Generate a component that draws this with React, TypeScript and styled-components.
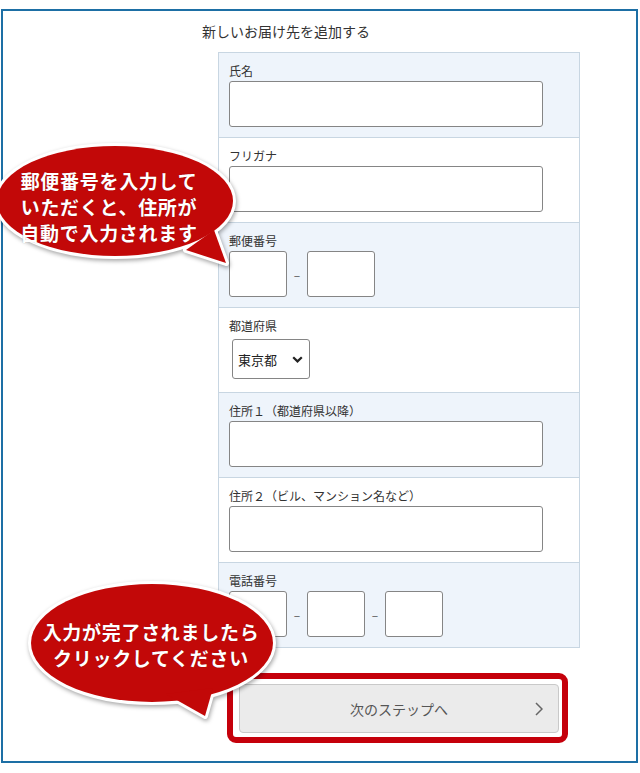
import React from "react";
import styled, { createGlobalStyle } from "styled-components";

const Global = createGlobalStyle`
  html, body { margin: 0; padding: 0; background: #fff; }
  body { font-family: "Noto Sans CJK JP", "Noto Sans", sans-serif; color: #333; }
  * { box-sizing: border-box; }
`;

const Page = styled.div`
  position: relative;
  width: 640px;
  height: 773px;
  padding: 9px 0 0 1px;
  overflow: hidden;
`;

const Frame = styled.div`
  width: 637px;
  height: 754px;
  border: 2px solid #1d6fa5;
  padding: 10px 0 0 199px;
`;

const Title = styled.h2`
  margin: 0 0 11px;
  font-size: 14px;
  line-height: 20px;
  font-weight: 400;
  color: #333;
`;

const Form = styled.div`
  margin-left: 16px;
  width: 362px;
  border: 1px solid #c8d6e2;
`;

const Row = styled.div<{ $shaded: boolean }>`
  height: 85px;
  padding: 9px 10px 0;
  border-top: 1px solid #c8d6e2;
  background: ${(p) => (p.$shaded ? "#eef4fb" : "#ffffff")};
  &:first-child {
    height: 84px;
    border-top: none;
  }
`;

const Label = styled.div`
  font-size: 12px;
  line-height: 18px;
  margin-bottom: 1px;
  color: #333;
`;

const TextInput = styled.input<{ $w?: number }>`
  display: block;
  width: ${(p) => p.$w ?? 314}px;
  height: 46px;
  border: 1px solid #858585;
  border-radius: 3px;
  background: #fff;
  padding: 0 6px;
  font: inherit;
  font-size: 13px;
`;

const Inline = styled.div`
  display: flex;
  align-items: center;
`;

const Dash = styled.span`
  width: 20px;
  text-align: center;
  font-size: 12px;
  color: #555;
`;

const SelectWrap = styled.div`
  position: relative;
  width: 78px;
  height: 40px;
  margin: 4px 0 0 3px;
`;

const Select = styled.select`
  appearance: none;
  -webkit-appearance: none;
  width: 100%;
  height: 100%;
  border: 1px solid #858585;
  border-radius: 3px;
  background: #fff;
  padding: 0 0 0 5px;
  font-family: "Noto Sans CJK JP", sans-serif;
  font-size: 13px;
  color: #222;
`;

const SelectArrow = styled.svg`
  position: absolute;
  right: 7px;
  top: 17px;
  pointer-events: none;
`;

const ButtonArea = styled.div`
  margin: 25px 0 0 25px;
`;

const Highlight = styled.div`
  width: 341px;
  height: 70px;
  border: 6px solid #c5000b;
  border-radius: 9px;
  padding: 5px 3px 4px 6px;
`;

const NextButton = styled.button`
  position: relative;
  display: flex;
  align-items: center;
  justify-content: center;
  width: 320px;
  height: 49px;
  background: #ebebeb;
  border: 1px solid #c9c9c9;
  border-radius: 4px;
  font-family: "Noto Sans CJK JP", sans-serif;
  font-size: 14px;
  color: #555;
  padding: 0;
`;

const Chevron = styled.svg`
  position: absolute;
  right: 15px;
  top: 17px;
`;

const BubbleSvg = styled.svg`
  position: absolute;
  filter: drop-shadow(1px 2px 2px rgba(0, 0, 0, 0.35));
  overflow: visible;
`;

const BubbleText = styled.div<{ $lh: number }>`
  position: absolute;
  width: 260px;
  color: #fff;
  font-family: "Noto Sans CJK JP", sans-serif;
  font-weight: 700;
  font-size: 19px;
  letter-spacing: 0.7px;
  line-height: ${(p) => p.$lh}px;
  text-align: center;
  white-space: nowrap;
  text-shadow: 0 0 1px rgba(0, 0, 0, 0.3);
`;

const Line = styled.div`
  display: block;
`;

const RED = "#c20808";

type BubbleProps = {
  left: number;
  top: number;
  width: number;
  height: number;
  cx: number;
  cy: number;
  rx: number;
  ry: number;
  tail: string;
};

function Bubble({ left, top, width, height, cx, cy, rx, ry, tail }: BubbleProps) {
  return (
    <BubbleSvg
      style={{ left, top }}
      width={width}
      height={height}
      viewBox={`${left} ${top} ${width} ${height}`}
    >
      <ellipse cx={cx} cy={cy} rx={rx} ry={ry} fill="#fff" stroke="#fff" strokeWidth={6} />
      <polygon points={tail} fill="#fff" stroke="#fff" strokeWidth={6} strokeLinejoin="round" />
      <ellipse cx={cx} cy={cy} rx={rx} ry={ry} fill={RED} />
      <polygon points={tail} fill={RED} />
    </BubbleSvg>
  );
}

export default function App() {
  return (
    <>
      <Global />
      <Page>
        <Frame>
          <Title>新しいお届け先を追加する</Title>
          <Form>
            <Row $shaded>
              <Label>氏名</Label>
              <TextInput />
            </Row>
            <Row $shaded={false}>
              <Label>フリガナ</Label>
              <TextInput />
            </Row>
            <Row $shaded>
              <Label>郵便番号</Label>
              <Inline>
                <TextInput $w={58} />
                <Dash>–</Dash>
                <TextInput $w={68} />
              </Inline>
            </Row>
            <Row $shaded={false}>
              <Label>都道府県</Label>
              <SelectWrap>
                <Select defaultValue="東京都">
                  <option>東京都</option>
                </Select>
                <SelectArrow width="11" height="7" viewBox="0 0 11 7">
                  <polyline points="1.2,1.2 5.5,5.4 9.8,1.2" fill="none" stroke="#222" strokeWidth="2.2" />
                </SelectArrow>
              </SelectWrap>
            </Row>
            <Row $shaded>
              <Label>住所１（都道府県以降）</Label>
              <TextInput />
            </Row>
            <Row $shaded={false}>
              <Label>住所２（ビル、マンション名など）</Label>
              <TextInput />
            </Row>
            <Row $shaded>
              <Label>電話番号</Label>
              <Inline>
                <TextInput $w={58} />
                <Dash>–</Dash>
                <TextInput $w={58} />
                <Dash>–</Dash>
                <TextInput $w={58} />
              </Inline>
            </Row>
          </Form>
          <ButtonArea>
            <Highlight>
              <NextButton>
                次のステップへ
                <Chevron width="8" height="14" viewBox="0 0 8 14">
                  <polyline points="1,1 7,7 1,13" fill="none" stroke="#666" strokeWidth="1.5" />
                </Chevron>
              </NextButton>
            </Highlight>
          </ButtonArea>
        </Frame>

        <Bubble
          left={-10}
          top={138}
          width={252}
          height={135}
          cx={115}
          cy={201}
          rx={118}
          ry={55}
          tail="186,250 226,263 214,230"
        />
        <BubbleText $lh={26} style={{ left: -21, top: 168 }}>
          <Line>郵便番号を入力して</Line>
          <Line>いただくと、住所が</Line>
          <Line>自動で入力されます</Line>
        </BubbleText>

        <Bubble
          left={20}
          top={575}
          width={265}
          height={150}
          cx={152}
          cy={643}
          rx={121}
          ry={59}
          tail="166,694 205,716 213,688"
        />
        <BubbleText $lh={26} style={{ left: 21, top: 619 }}>
          <Line>入力が完了されましたら</Line>
          <Line>クリックしてください</Line>
        </BubbleText>
      </Page>
    </>
  );
}
